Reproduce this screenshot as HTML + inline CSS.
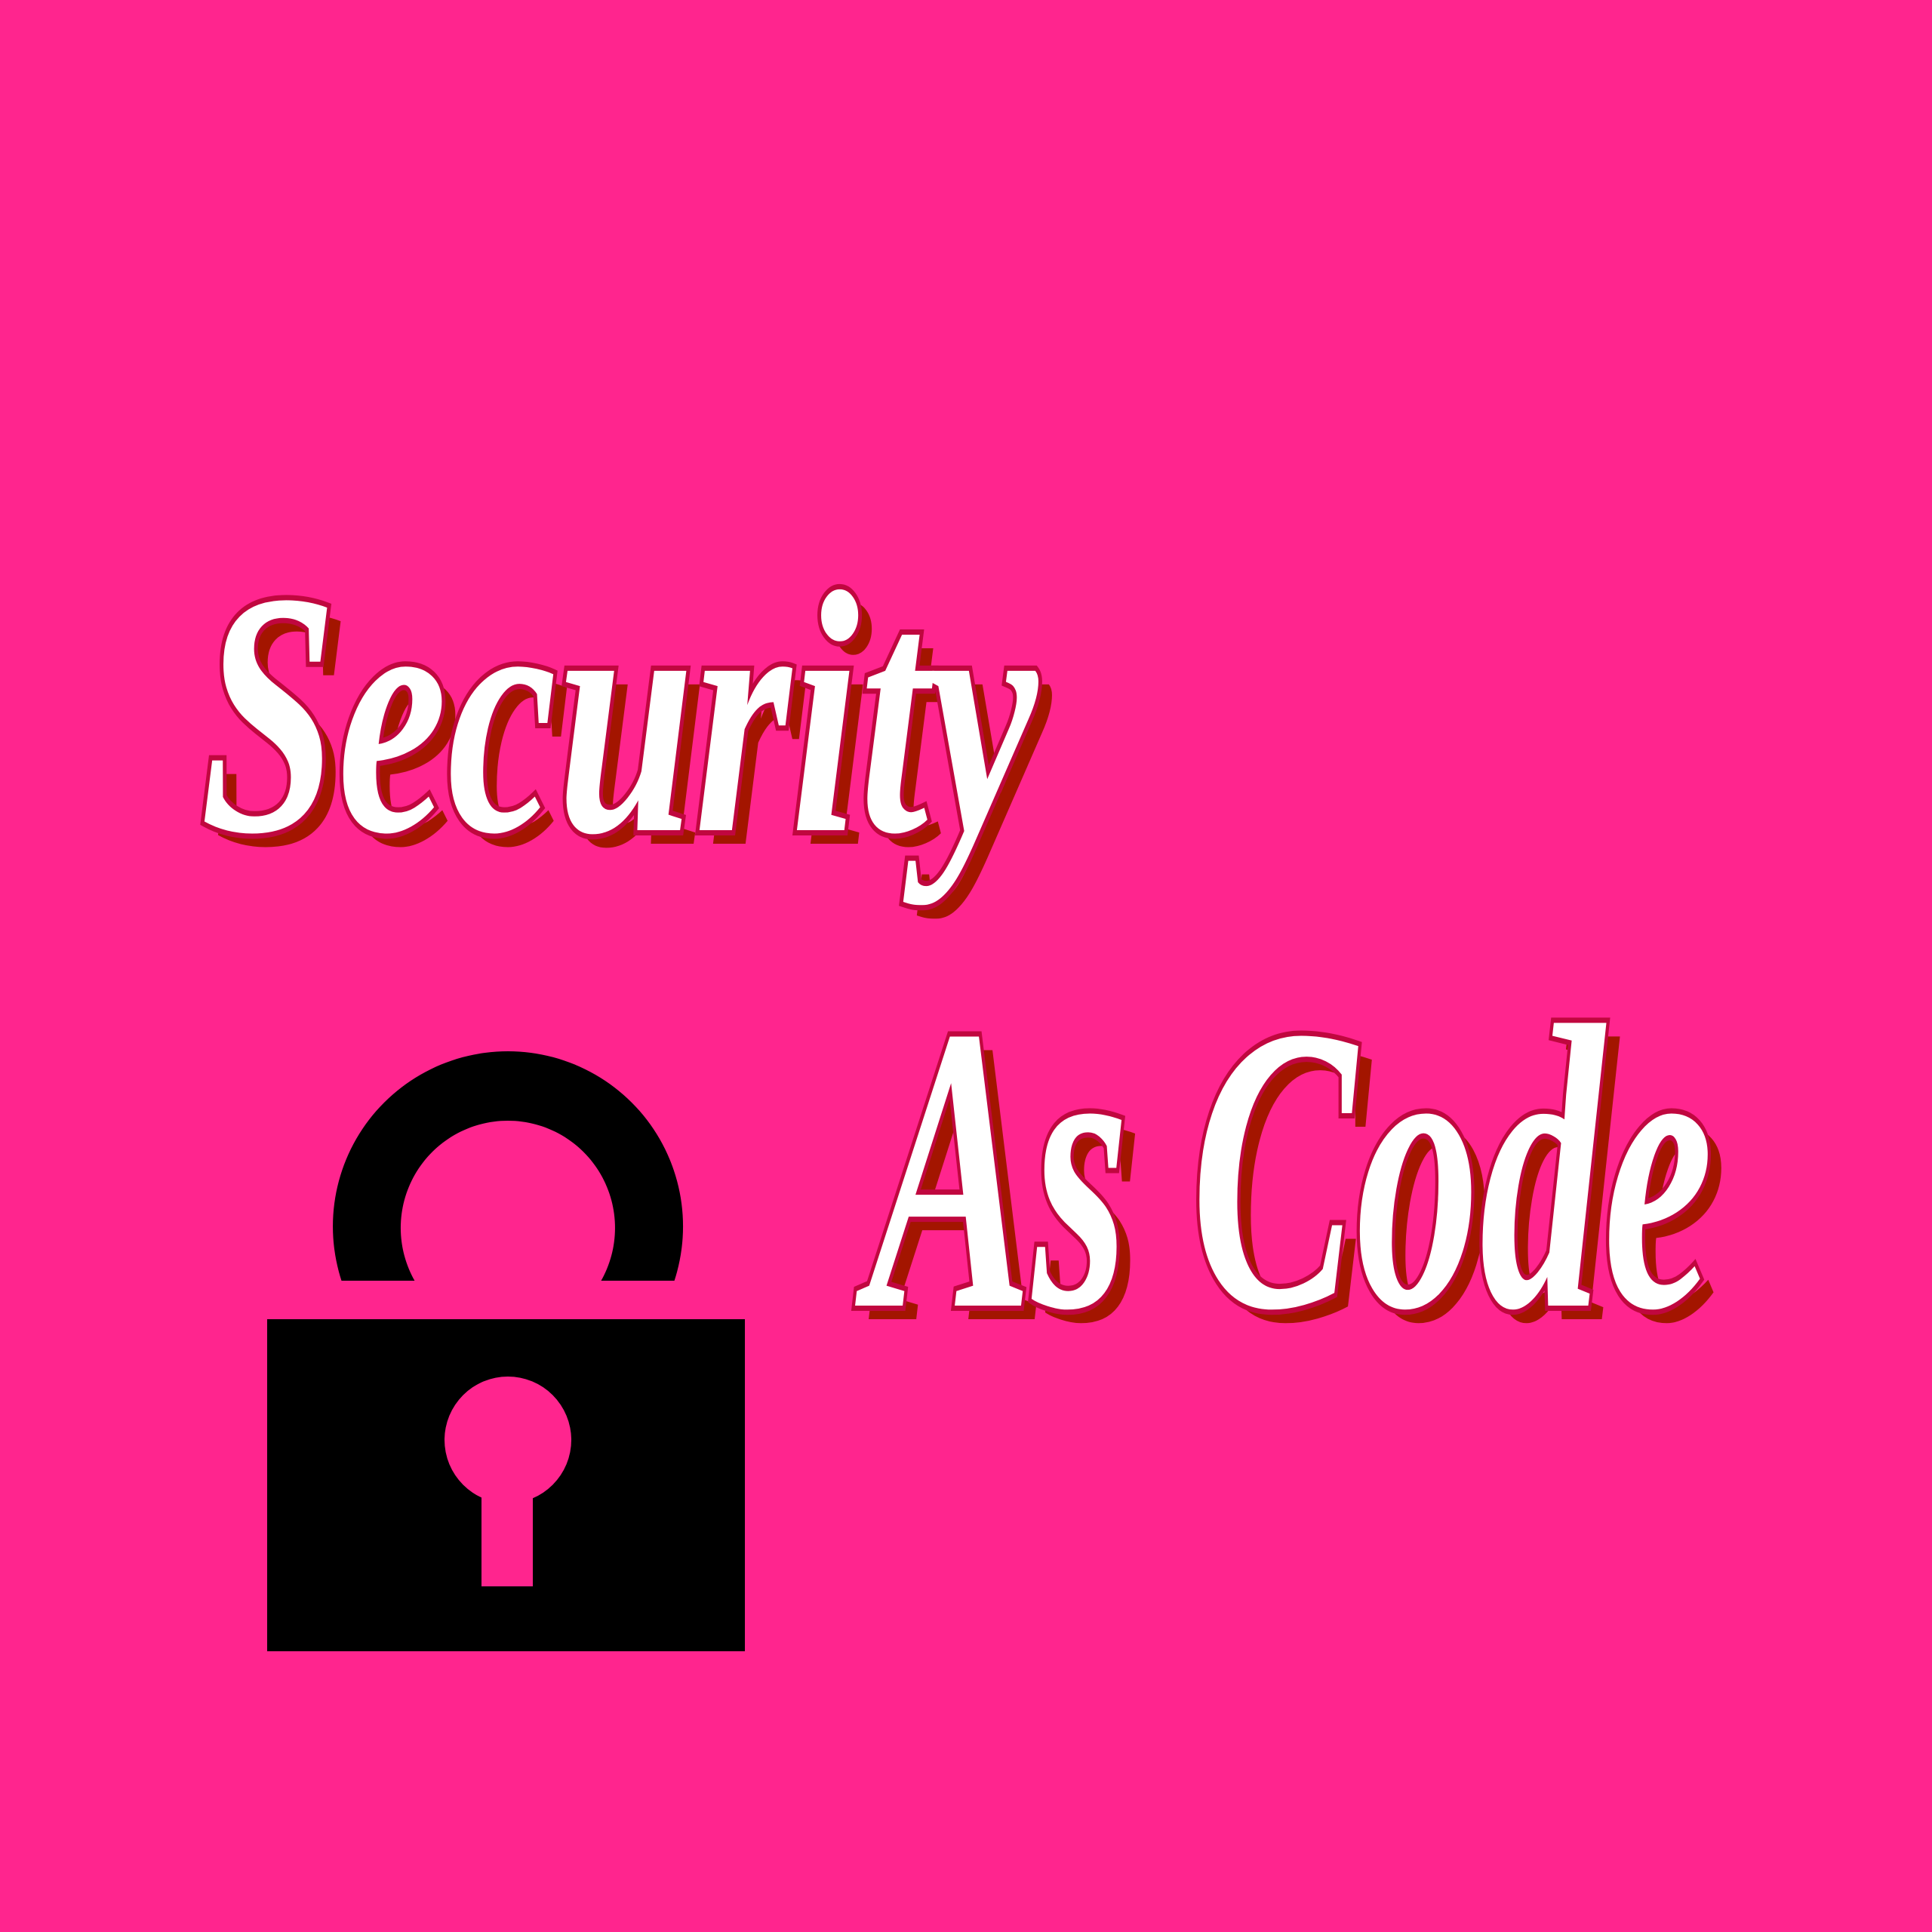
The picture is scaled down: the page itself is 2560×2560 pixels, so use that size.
<!DOCTYPE html>
<html><head><meta charset="utf-8"><style>
html,body{margin:0;padding:0;background:#FF258E;}
svg{display:block}
.t{font-family:"Liberation Serif",serif;font-style:italic;font-weight:bold;}
</style></head><body>
<svg width="2560" height="2560" viewBox="0 0 2560 2560" xmlns="http://www.w3.org/2000/svg">
<rect width="2560" height="2560" fill="#FF258E"/>
<defs><clipPath id="c"><rect x="0" y="0" width="2560" height="1697"/></clipPath></defs>
<path clip-path="url(#c)" fill-rule="evenodd" fill="#000" d="M673,1393 a232,232 0 1,0 0.1,0 Z M673,1485 a142,142 0 1,1 -0.1,0 Z"/>
<rect x="354" y="1748" width="633" height="440" fill="#000"/>
<circle cx="673" cy="1908" r="84" fill="#FF258E"/>
<rect x="638" y="1920" width="68" height="182" fill="#FF258E"/>
<g class="t">
<text x="283" y="1118" font-size="460" textLength="1110" lengthAdjust="spacingAndGlyphs" fill="#A31500">Security</text>
<text x="265" y="1100" font-size="460" textLength="1110" lengthAdjust="spacingAndGlyphs" fill="#fff" stroke="#C0073F" stroke-width="14" paint-order="stroke">Security</text>
<text x="1168" y="1748" font-size="540" textLength="1120" lengthAdjust="spacingAndGlyphs" fill="#A31500">As Code</text>
<text x="1150" y="1730" font-size="540" textLength="1120" lengthAdjust="spacingAndGlyphs" fill="#fff" stroke="#C0073F" stroke-width="14" paint-order="stroke">As Code</text>
</g>
</svg>
</body></html>
